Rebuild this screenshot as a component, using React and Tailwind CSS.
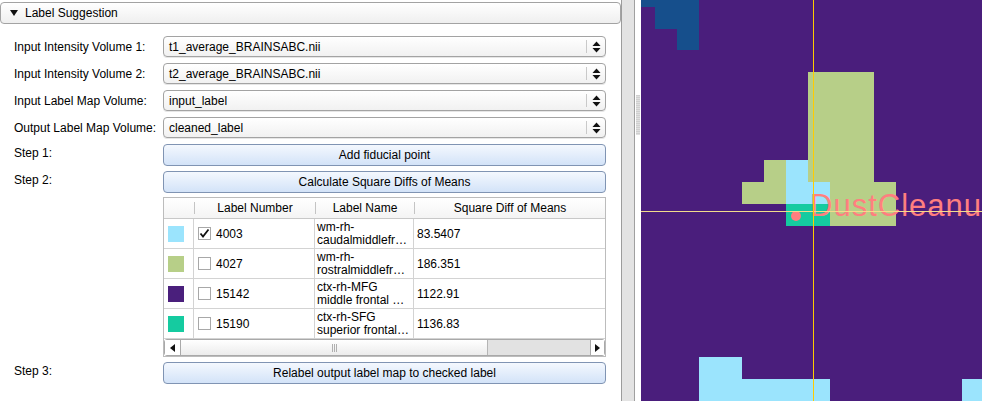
import React from 'react';

const combos = [
  { label: 'Input Intensity Volume 1:', value: 't1_average_BRAINSABC.nii' },
  { label: 'Input Intensity Volume 2:', value: 't2_average_BRAINSABC.nii' },
  { label: 'Input Label Map Volume:', value: 'input_label' },
  { label: 'Output Label Map Volume:', value: 'cleaned_label' },
];

const rows = [
  { color: 'bg-[#9be4fd]', num: '4003', name1: 'wm-rh-', name2: 'caudalmiddlefr…', diff: '83.5407', checked: true },
  { color: 'bg-[#b7cf88]', num: '4027', name1: 'wm-rh-', name2: 'rostralmiddlefr…', diff: '186.351' },
  { color: 'bg-[#4a1f7c]', num: '15142', name1: 'ctx-rh-MFG', name2: 'middle frontal …', diff: '1122.91' },
  { color: 'bg-[#15cba0]', num: '15190', name1: 'ctx-rh-SFG', name2: 'superior frontal…', diff: '1136.83' },
];

const UpDown = () => (
  <svg width="9" height="12" viewBox="0 0 9 12">
    <path d="M4.5 0.5 L8.5 5 L0.5 5 Z" fill="#111" />
    <path d="M0.5 7 L8.5 7 L4.5 11.5 Z" fill="#111" />
  </svg>
);

const Combo = ({ value }) => (
  <div className="w-[443px] h-[21px] flex items-center rounded-[4px] border border-[#a3a3a3] bg-gradient-to-b from-white to-[#f1f1f1] shadow-[0_1px_0_#e6e6e6]">
    <span className="flex-1 pl-[5px]">{value}</span>
    <div className="w-px h-[13px] bg-[#c9c9c9]" />
    <div className="w-[18px] flex justify-center">
      <UpDown />
    </div>
  </div>
);

const Button = ({ children }) => (
  <div className="w-[443px] h-[22px] flex items-center justify-center rounded-[4px] border border-[#8094b3] bg-gradient-to-b from-[#f4f8fe] to-[#d3e3f8]">
    {children}
  </div>
);

const Checkbox = ({ checked }) => (
  <div className="w-[13px] h-[13px] shrink-0 border border-[#a8a8a8] bg-white flex items-center justify-center">
    {checked && (
      <svg width="11" height="11" viewBox="0 0 11 11">
        <path d="M1.5 5.5 L4 8.5 L9.5 1.5" stroke="#111" strokeWidth="1.8" fill="none" />
      </svg>
    )}
  </div>
);

const Tri = ({ dir }) => (
  <svg width="5" height="8" viewBox="0 0 5 8">
    {dir === 'left' ? <path d="M5 0 L0 4 L5 8 Z" fill="#111" /> : <path d="M0 0 L5 4 L0 8 Z" fill="#111" />}
  </svg>
);

const Table = () => (
  <div className="w-[443px] h-[160px] border border-[#bcbcbc] flex flex-col bg-white">
    {/* header */}
    <div className="h-[21px] shrink-0 flex items-center bg-gradient-to-b from-white to-[#f4f4f4] border-b border-[#c8c8c8]">
      <div className="w-[30px]" />
      <div className="w-px h-[12px] bg-[#c4c4c4]" />
      <div className="w-[120px] text-center">Label Number</div>
      <div className="w-px h-[12px] bg-[#c4c4c4]" />
      <div className="w-[98px] text-center">Label Name</div>
      <div className="w-px h-[12px] bg-[#c4c4c4]" />
      <div className="flex-1 text-center">Square Diff of Means</div>
    </div>
    {rows.map((r) => (
      <div key={r.num} className="h-[30px] shrink-0 flex border-b border-[#d3d3d3]">
        <div className="w-[30px] flex items-center pl-[4px] border-r border-[#d3d3d3]">
          <div className={`w-[16px] h-[16px] ${r.color}`} />
        </div>
        <div className="w-[121px] flex items-center pl-[4px] gap-[5px] border-r border-[#d3d3d3]">
          <Checkbox checked={r.checked} />
          <span>{r.num}</span>
        </div>
        <div className="w-[99px] flex flex-col justify-center pl-[2px] leading-[13px] border-r border-[#d3d3d3] overflow-hidden whitespace-nowrap">
          <span>{r.name1}</span>
          <span>{r.name2}</span>
        </div>
        <div className="flex-1 flex items-center pl-[3px]">{r.diff}</div>
      </div>
    ))}
    <div className="flex-1" />
    {/* horizontal scrollbar */}
    <div className="h-[17px] shrink-0 flex border border-[#a9a9a9] rounded-[3px] bg-[#e6e6e6]">
      <div className="w-[16px] flex items-center justify-center border-r border-[#a9a9a9] bg-white">
        <Tri dir="left" />
      </div>
      <div className="w-[307px] flex items-center justify-center bg-gradient-to-b from-white to-[#ececec] border-r border-[#b5b5b5]">
        <div className="flex gap-[1px]">
          <div className="w-px h-[8px] bg-[#b0b0b0]" />
          <div className="w-px h-[8px] bg-[#b0b0b0]" />
          <div className="w-px h-[8px] bg-[#b0b0b0]" />
        </div>
      </div>
      <div className="flex-1 bg-[#e2e2e2]" />
      <div className="w-[14px] flex items-center justify-center border-l border-[#a9a9a9] bg-white">
        <Tri dir="right" />
      </div>
    </div>
  </div>
);

const Viewer = () => (
  <div className="relative w-[341px] h-[401px] bg-[#4a1e7c] overflow-hidden">
    {/* dark blue region top-left */}
    <div className="absolute left-0 top-0 w-[58px] h-[7px] bg-[#164f8c]" />
    <div className="absolute left-[14px] top-[7px] w-[44px] h-[22px] bg-[#164f8c]" />
    <div className="absolute left-[36px] top-[29px] w-[22px] h-[21px] bg-[#164f8c]" />
    {/* green label */}
    <div className="absolute left-[167px] top-[72px] w-[66px] h-[154px] bg-[#b7cf88]" />
    <div className="absolute left-[123px] top-[160px] w-[22px] h-[44px] bg-[#b7cf88]" />
    <div className="absolute left-[101px] top-[182px] w-[44px] h-[22px] bg-[#b7cf88]" />
    <div className="absolute left-[189px] top-[182px] w-[66px] h-[44px] bg-[#b7cf88]" />
    {/* light blue */}
    <div className="absolute left-[145px] top-[160px] w-[22px] h-[44px] bg-[#9be4fd]" />
    <div className="absolute left-[167px] top-[182px] w-[22px] h-[22px] bg-[#9be4fd]" />
    {/* teal */}
    <div className="absolute left-[145px] top-[204px] w-[44px] h-[22px] bg-[#15cba0]" />
    {/* bottom light blue */}
    <div className="absolute left-[58px] top-[357px] w-[43px] h-[44px] bg-[#9be4fd]" />
    <div className="absolute left-[101px] top-[379px] w-[88px] h-[22px] bg-[#9be4fd]" />
    <div className="absolute left-[321px] top-[379px] w-[20px] h-[22px] bg-[#9be4fd]" />
    {/* fiducial */}
    <div className="absolute left-[150px] top-[211px] w-[10px] h-[10px] rounded-full bg-[#ff7f7f]" />
    <div className="absolute left-[169px] top-[188px] text-[31px] leading-[36px] tracking-[1px] text-[#ff7f7f] whitespace-nowrap">
      DustCleanup
    </div>
    {/* crosshair */}
    <div className="absolute left-0 top-[211px] w-[341px] h-px bg-[#f3dc8c]" />
    <div className="absolute left-[172px] top-0 w-px h-[401px] bg-[#ffcc00]" />
  </div>
);

export default function App() {
  return (
    <div className="w-[983px] h-[401px] flex bg-white text-black text-[12px] leading-[18px] font-['Liberation_Sans',Arial,sans-serif] overflow-hidden">
      {/* left module panel */}
      <div className="w-[622px] h-[401px] border-r border-[#9c9c9c] flex flex-col">
        <div className="mt-[2px] w-[621px] h-[22px] flex items-center gap-[7px] pl-[9px] rounded-[4px] border border-[#a3a3a3] bg-gradient-to-b from-white to-[#efefef]">
          <svg width="8" height="6" viewBox="0 0 8 6">
            <path d="M0 0 L8 0 L4 6 Z" fill="#111" />
          </svg>
          <span>Label Suggestion</span>
        </div>

        <div className="flex flex-col gap-[6px] mt-[12px]">
          {combos.map((c) => (
            <div key={c.label} className="flex items-center">
              <div className="w-[163px] pl-[14px] whitespace-nowrap">{c.label}</div>
              <Combo value={c.value} />
            </div>
          ))}
        </div>

        <div className="flex mt-[6px]">
          <div className="w-[163px] pl-[14px]">Step 1:</div>
          <Button>Add fiducial point</Button>
        </div>

        <div className="flex mt-[5px]">
          <div className="w-[163px] pl-[14px]">Step 2:</div>
          <div className="flex flex-col gap-[4px]">
            <Button>Calculate Square Diffs of Means</Button>
            <Table />
          </div>
        </div>

        <div className="flex mt-[5px]">
          <div className="w-[163px] pl-[14px]">Step 3:</div>
          <Button>Relabel output label map to checked label</Button>
        </div>
      </div>

      {/* vertical scrollbar track */}
      <div className="w-[13px] h-[401px] bg-[#e3e3e3] border-r border-[#a0a0a0]" />

      {/* splitter */}
      <div className="w-[6px] h-[401px] bg-white flex flex-col items-center pt-[95px]">
        <div className="w-[4px] h-[40px] bg-[repeating-linear-gradient(to_bottom,#cfcfcf_0px,#cfcfcf_1px,#e0e0e0_1px,#e0e0e0_2px)]" />
      </div>

      <Viewer />
    </div>
  );
}
